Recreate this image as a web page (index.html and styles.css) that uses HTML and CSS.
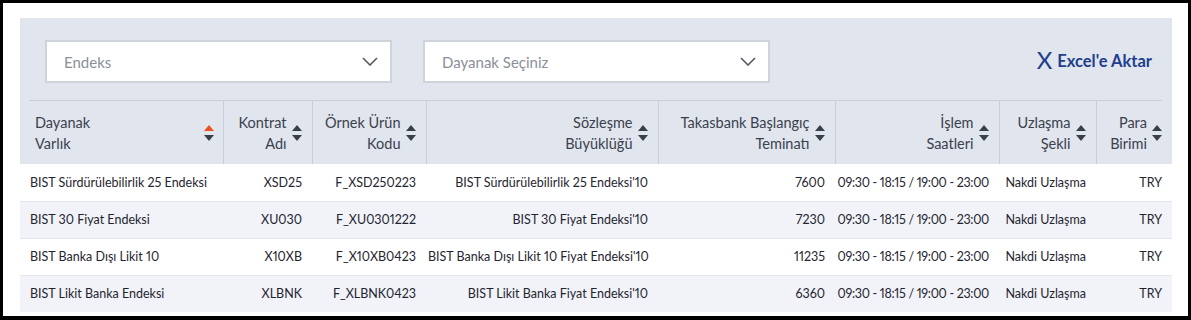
FILE: index.html
```html
<!DOCTYPE html>
<html lang="tr">
<head>
<meta charset="utf-8">
<link rel="stylesheet" href="styles.css">
</head>
<body>
<div class="frame">
  <div class="panel">
    <div class="filters">
      <div class="select">
        <span class="placeholder">Endeks</span>
        <svg class="chev" width="16" height="9" viewBox="0 0 16 9"><polyline points="1,1 8,8 15,1" fill="none" stroke="#555b66" stroke-width="1.6"/></svg>
      </div>
      <div class="select">
        <span class="placeholder">Dayanak Seçiniz</span>
        <svg class="chev" width="16" height="9" viewBox="0 0 16 9"><polyline points="1,1 8,8 15,1" fill="none" stroke="#555b66" stroke-width="1.6"/></svg>
      </div>
      <a class="excel"><span class="xmark">X</span>Excel'e Aktar</a>
    </div>
    <div class="divider"></div>
    <table class="grid">
      <colgroup>
        <col class="c1"><col class="c2"><col class="c3"><col class="c4"><col class="c5"><col class="c6"><col class="c7"><col class="c8">
      </colgroup>
      <thead>
        <tr>
          <th class="first"><div class="hd split"><span>Dayanak<br>Varlık</span><svg class="sort" width="10" height="16" viewBox="0 0 10 16"><polygon points="0,6 5,0 10,6" fill="#f0501f"/><polygon points="0,10 10,10 5,16" fill="#3a404b"/></svg></div></th>
          <th><div class="hd"><span>Kontrat<br>Adı</span><svg class="sort" width="10" height="16" viewBox="0 0 10 16"><polygon points="0,6 5,0 10,6" fill="#3a404b"/><polygon points="0,10 10,10 5,16" fill="#3a404b"/></svg></div></th>
          <th><div class="hd"><span>Örnek Ürün<br>Kodu</span><svg class="sort" width="10" height="16" viewBox="0 0 10 16"><polygon points="0,6 5,0 10,6" fill="#3a404b"/><polygon points="0,10 10,10 5,16" fill="#3a404b"/></svg></div></th>
          <th><div class="hd"><span>Sözleşme<br>Büyüklüğü</span><svg class="sort" width="10" height="16" viewBox="0 0 10 16"><polygon points="0,6 5,0 10,6" fill="#3a404b"/><polygon points="0,10 10,10 5,16" fill="#3a404b"/></svg></div></th>
          <th><div class="hd"><span>Takasbank Başlangıç<br>Teminatı</span><svg class="sort" width="10" height="16" viewBox="0 0 10 16"><polygon points="0,6 5,0 10,6" fill="#3a404b"/><polygon points="0,10 10,10 5,16" fill="#3a404b"/></svg></div></th>
          <th><div class="hd"><span>İşlem<br>Saatleri</span><svg class="sort" width="10" height="16" viewBox="0 0 10 16"><polygon points="0,6 5,0 10,6" fill="#3a404b"/><polygon points="0,10 10,10 5,16" fill="#3a404b"/></svg></div></th>
          <th><div class="hd"><span>Uzlaşma<br>Şekli</span><svg class="sort" width="10" height="16" viewBox="0 0 10 16"><polygon points="0,6 5,0 10,6" fill="#3a404b"/><polygon points="0,10 10,10 5,16" fill="#3a404b"/></svg></div></th>
          <th><div class="hd"><span>Para<br>Birimi</span><svg class="sort" width="10" height="16" viewBox="0 0 10 16"><polygon points="0,6 5,0 10,6" fill="#3a404b"/><polygon points="0,10 10,10 5,16" fill="#3a404b"/></svg></div></th>
        </tr>
      </thead>
      <tbody>
        <tr>
          <td class="left">BIST Sürdürülebilirlik 25 Endeksi</td>
          <td>XSD25</td>
          <td>F_XSD250223</td>
          <td>BIST Sürdürülebilirlik 25 Endeksi'10</td>
          <td>7600</td>
          <td class="hours">09:30 - 18:15 / 19:00 - 23:00</td>
          <td>Nakdi Uzlaşma</td>
          <td>TRY</td>
        </tr>
        <tr>
          <td class="left">BIST 30 Fiyat Endeksi</td>
          <td>XU030</td>
          <td>F_XU0301222</td>
          <td>BIST 30 Fiyat Endeksi'10</td>
          <td>7230</td>
          <td class="hours">09:30 - 18:15 / 19:00 - 23:00</td>
          <td>Nakdi Uzlaşma</td>
          <td>TRY</td>
        </tr>
        <tr>
          <td class="left">BIST Banka Dışı Likit 10</td>
          <td>X10XB</td>
          <td>F_X10XB0423</td>
          <td>BIST Banka Dışı Likit 10 Fiyat Endeksi'10</td>
          <td>11235</td>
          <td class="hours">09:30 - 18:15 / 19:00 - 23:00</td>
          <td>Nakdi Uzlaşma</td>
          <td>TRY</td>
        </tr>
        <tr>
          <td class="left">BIST Likit Banka Endeksi</td>
          <td>XLBNK</td>
          <td>F_XLBNK0423</td>
          <td>BIST Likit Banka Fiyat Endeksi'10</td>
          <td>6360</td>
          <td class="hours">09:30 - 18:15 / 19:00 - 23:00</td>
          <td>Nakdi Uzlaşma</td>
          <td>TRY</td>
        </tr>
      </tbody>
    </table>
  </div>
</div>
</body>
</html>
```

FILE: styles.css
```css
* { box-sizing: border-box; }
html, body { margin: 0; padding: 0; background: #fff; }
body { font-family: Lato, "Noto Sans", sans-serif; }

.frame {
  width: 1191px;
  height: 320px;
  border: 3px solid #000;
  border-bottom-width: 4px;
  background: #fff;
  padding: 15px 16px 0 17px;
}

.panel {
  background: #e1e5ee;
  height: 294px;
}

.filters {
  display: flex;
  align-items: center;
  padding: 22px 20px 17px 25px;
  height: 82px;
}

.select {
  width: 347px;
  height: 43px;
  background: #fff;
  border: 2px solid #cfd3da;
  display: flex;
  align-items: center;
  justify-content: space-between;
  padding: 0 12px 0 17px;
  margin-right: 31px;
}
.select + .select { margin-right: 0; }

.placeholder {
  font-size: 15px;
  color: #8a8f98;
}

.excel {
  margin-left: auto;
  display: flex;
  align-items: center;
  color: #213e8d;
  font-size: 16.5px;
  font-weight: 700;
  margin-top: -2px;
}
.xmark {
  font-size: 24px;
  font-weight: 400;
  margin-right: 5px;
  line-height: 1;
  margin-top: -2px;
}

.divider {
  height: 1px;
  background: #c9ced8;
  margin: 0 10px 0 9px;
}

.grid {
  width: 1152px;
  table-layout: fixed;
  border-collapse: collapse;
}
.c1 { width: 203px; }
.c2 { width: 89px; }
.c3 { width: 114px; }
.c4 { width: 232px; }
.c5 { width: 177px; }
.c6 { width: 164px; }
.c7 { width: 97px; }
.c8 { width: 76px; }

.grid th {
  height: 63px;
  padding: 0 10px 0 8px;
  font-weight: 400;
  font-size: 14.5px;
  line-height: 21px;
  color: #3a414d;
  border-left: 1px solid #c9ced8;
  text-align: right;
  vertical-align: middle;
}
.grid th.first {
  border-left: none;
  text-align: left;
  padding-left: 15px;
  padding-right: 9px;
}

.hd {
  display: flex;
  align-items: center;
  justify-content: flex-end;
  gap: 5px;
}
.hd.split { justify-content: space-between; }
.sort { flex: none; }

.grid td {
  height: 37px;
  padding: 0 10px 0 2px;
  font-size: 12.5px;
  color: #1f2530;
  text-align: right;
  white-space: nowrap;
  border-bottom: 1px solid #e3e6ed;
  background: #fff;
  font-variant-numeric: proportional-nums;
}
.grid td.hours { letter-spacing: -0.3px; }
.grid tbody tr:nth-child(even) td { background: #f1f3f8; }
.grid tbody tr:last-child td { border-bottom: none; }
.grid td.left {
  text-align: left;
  padding-left: 10px;
}
```
